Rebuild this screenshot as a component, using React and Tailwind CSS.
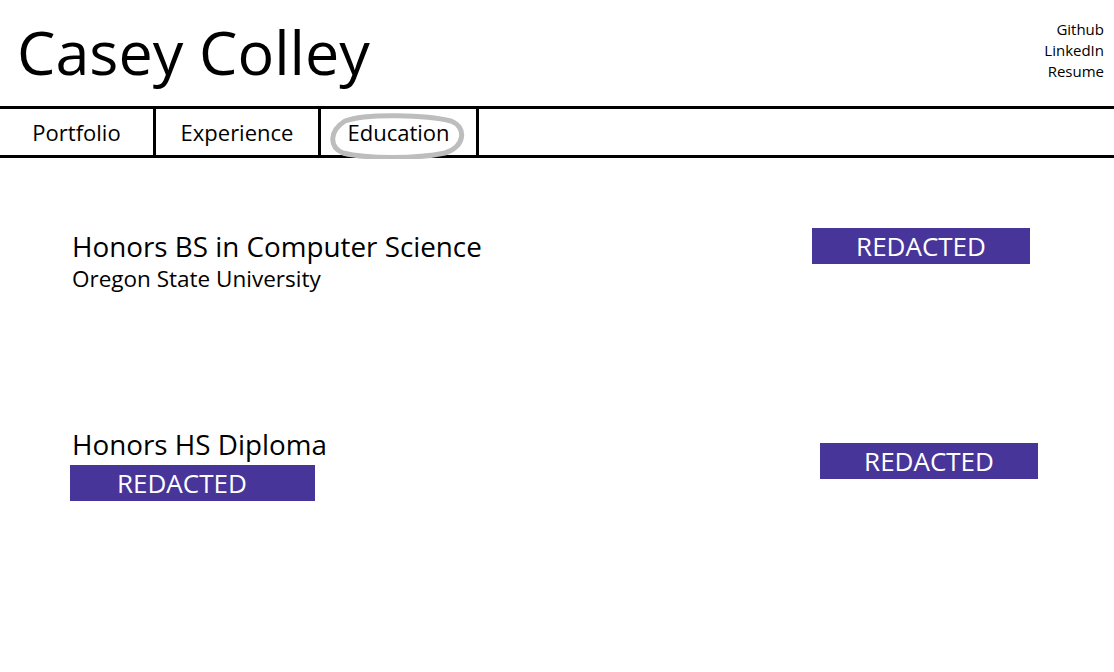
import React from 'react';

const font = { fontFamily: '"Open Sans", "Noto Sans", sans-serif' };

const Redacted = ({ className }) => (
  <div className={`bg-[#48359a] text-white text-[26px] leading-none flex items-center h-[36px] ${className}`}>
    REDACTED
  </div>
);

const Tab = ({ label, width, circled }) => (
  <div className={`relative flex items-center justify-center h-full border-r-[3px] border-black ${width}`}>
    <span className="text-[22px] text-black">{label}</span>
    {circled && (
      <svg className="absolute left-[6px] top-[2px] pointer-events-none" width="138" height="48" viewBox="0 0 138 48">
        <path
          d="M18 10 C40 2, 100 4, 124 10 C140 16, 138 36, 118 42 C90 48, 40 48, 16 42 C2 36, 2 20, 18 10 Z"
          fill="none"
          stroke="#bdbdbd"
          strokeWidth="5"
        />
      </svg>
    )}
  </div>
);

export default function App() {
  return (
    <div className="w-[1114px] h-[672px] bg-white text-black overflow-hidden" style={font}>
      <header className="flex justify-between h-[106px]">
        <h1 className="pl-[17px] pt-[21px] text-[61px] leading-none font-normal">Casey Colley</h1>
        <ul className="pr-[10px] pt-[19px] text-right text-[15px] leading-[21px]">
          <li>Github</li>
          <li>LinkedIn</li>
          <li>Resume</li>
        </ul>
      </header>

      <nav className="flex h-[52px] border-y-[3px] border-black">
        <Tab label="Portfolio" width="w-[156px]" />
        <Tab label="Experience" width="w-[165px]" />
        <Tab label="Education" width="w-[158px]" circled />
      </nav>

      <main className="pt-[70px]">
        <section className="flex justify-between pl-[72px] pr-[84px]">
          <div>
            <h2 className="text-[27.8px] leading-[36px]">Honors BS in Computer Science</h2>
            <p className="text-[22.5px] leading-[30px]">Oregon State University</p>
          </div>
          <Redacted className="w-[218px] justify-center" />
        </section>

        <section className="flex justify-between pl-[70px] pr-[76px] mt-[132px]">
          <div>
            <h2 className="text-[27.8px] leading-[36px] pl-[2px]">Honors HS Diploma</h2>
            <Redacted className="w-[245px] mt-[3px] pl-[47px]" />
          </div>
          <Redacted className="w-[218px] mt-[17px] justify-center" />
        </section>
      </main>
    </div>
  );
}
